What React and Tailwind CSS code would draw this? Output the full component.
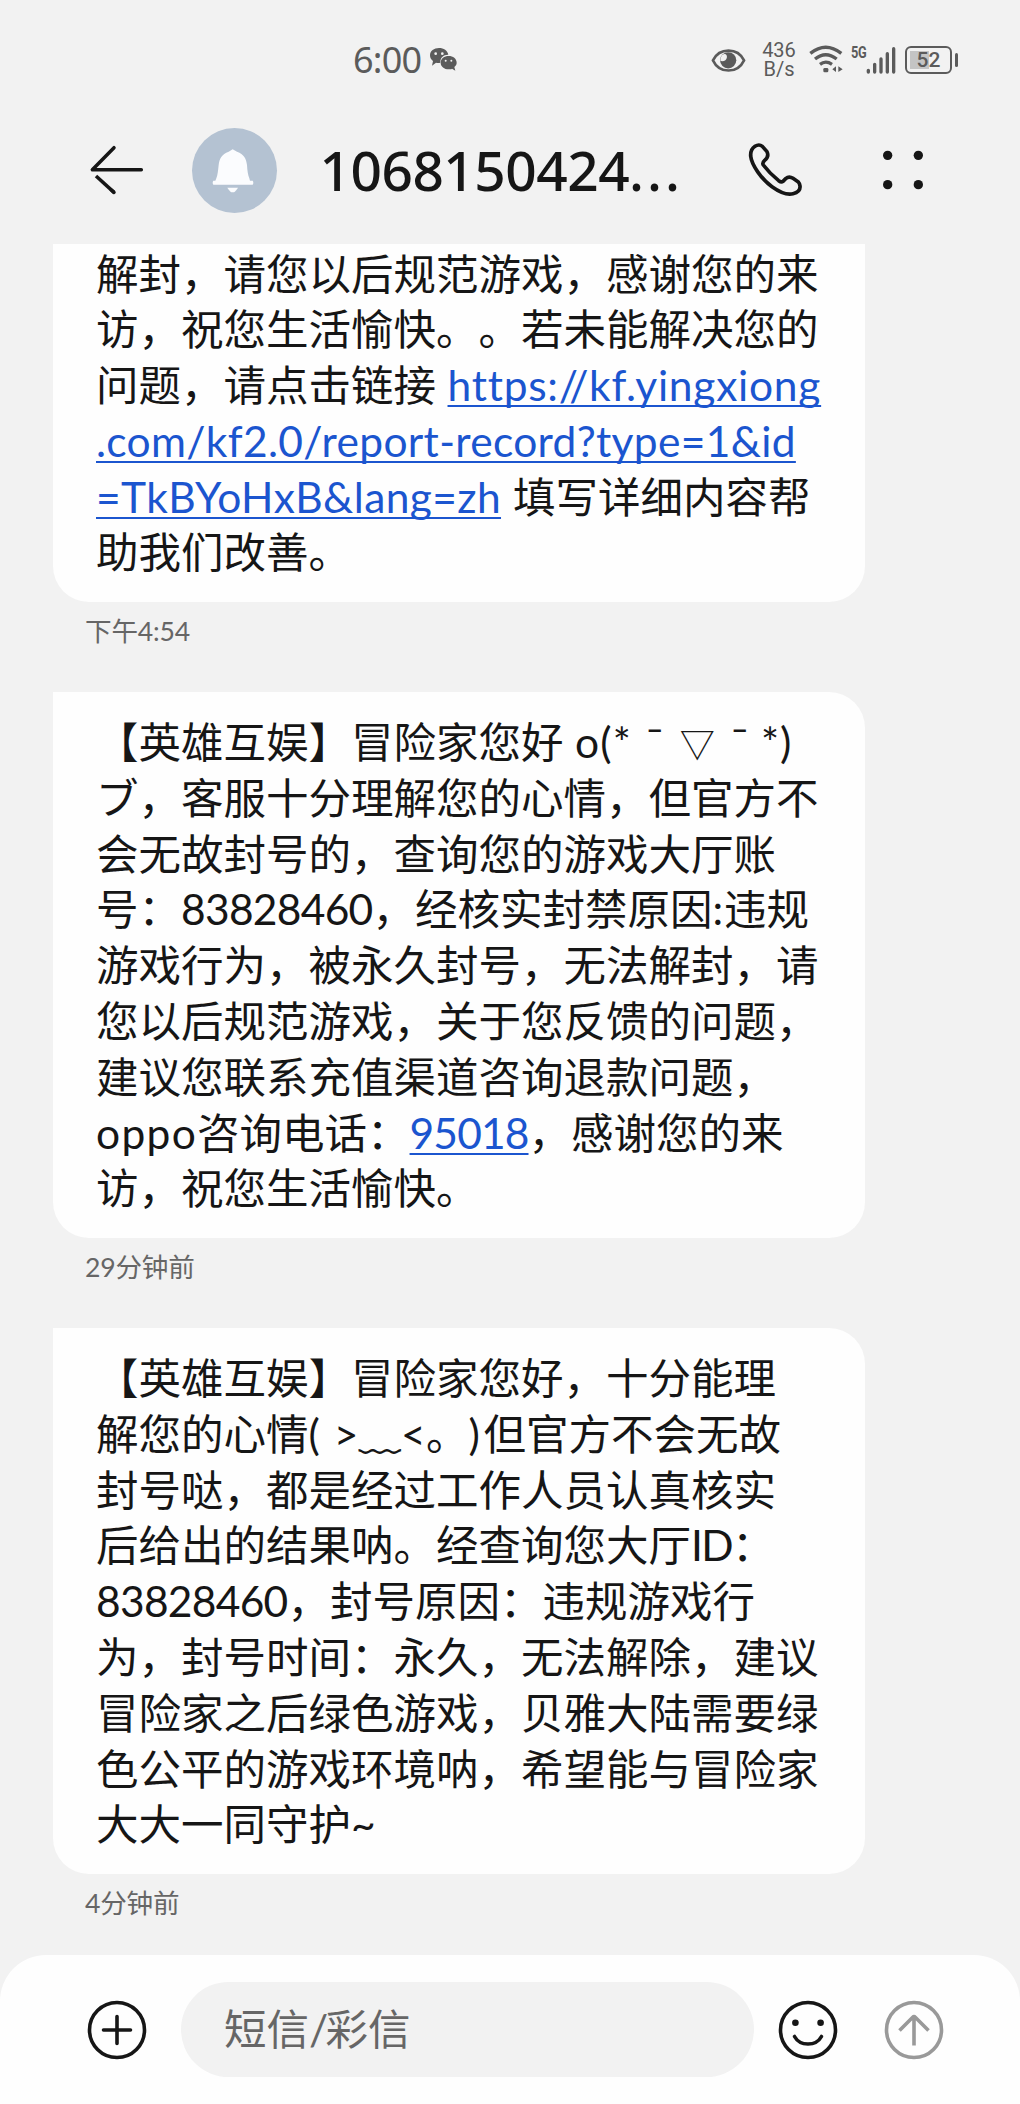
import React from "react";

const FONT = "font-['Lato','Noto_Sans_CJK_SC',sans-serif]";

function Line({ children }) {
  return <div className="flex h-[55.8px] items-baseline whitespace-pre">{children}</div>;
}

function Link({ children, className }) {
  return (
    <a className={`text-[#1b55cf] underline decoration-2 underline-offset-[4px] [text-decoration-skip-ink:none] ${className}`}>
      {children}
    </a>
  );
}

function Message({ children, time, className }) {
  return (
    <section>
      <div className={`w-[812px] bg-[#fefefe] pl-[43px] text-[42.5px] leading-[55.8px] text-[#161616] ${className}`}>
        {children}
      </div>
      <p className="ml-[32px] mt-[13px] h-8 whitespace-pre text-[26.6px] leading-8 tracking-[-0.2px] text-[#666]">{time}</p>
    </section>
  );
}

function StatusBar() {
  return (
    <header className="flex h-[120px] shrink-0 items-start pl-[353px] pt-[42px] text-[#5b5b5b]">
      <span className="w-[76px] font-['Noto_Sans'] text-[36px] leading-9 tracking-[-0.8px]">6:00</span>
      <svg className="mt-[5px] h-6 w-7" viewBox="268 50 84 72" fill="currentColor">
        <path d="M298 53c-15 0-27 9-27 22 0 7 3 13 9 17l-3 14 12-9c4 1 9 1 13 0-1-15 9-24 23-24h1c-2-12-14-20-28-20z" />
        <path d="M327 77c-13 0-24 8-24 20s11 20 24 20c4 0 7 0 10-2l10 6-3-11c5-4 7-8 7-13 0-12-11-20-24-20z" />
        <g fill="#f2f2f2"><circle cx="288" cy="70" r="4" /><circle cx="308" cy="70" r="4" /><circle cx="318" cy="91" r="3" /><circle cx="335" cy="91" r="3" /></g>
      </svg>
      <svg className="ml-[254px] mt-1.5 h-6 w-[35px]" viewBox="63 50 106 74" fill="none">
        <path d="M68 88C88 48 144 48 164 88C144 130 88 130 68 88Z" stroke="currentColor" strokeWidth="8" />
        <circle cx="115" cy="88" r="25" fill="currentColor" />
        <path d="M97 71C106 66 112 70 111 79C110 88 102 92 91 90C91 82 93 76 97 71Z" fill="#f2f2f2" />
      </svg>
      <div className="-mt-px ml-[15px] w-9 text-center font-['Roboto'] text-[20px] leading-[19px]">
        <p>436</p>
        <p>B/s</p>
      </div>
      <svg className="ml-[12px] mt-[3px] h-[30px] w-[35px]" viewBox="358 45 105 90" fill="none" stroke="currentColor" strokeWidth="10">
        <path d="M362 70Q408 33 455 70M376 87Q408 61 441 87M391 103Q408 90 427 103" />
        <rect x="401" y="114" width="15" height="13" rx="4" fill="currentColor" stroke="none" />
        <path d="M439 109v17l-11-8zM446 109v17l13-8z" fill="currentColor" stroke="none" />
      </svg>
      <span className="ml-[7px] w-[17px] font-['Roboto'] text-[17px] font-bold leading-5 tracking-[-0.5px]">
        <span className="inline-block origin-left scale-x-[0.75]">5G</span>
      </span>
      <svg className="-ml-0.5 mt-1 h-7 w-[31px]" viewBox="525 45 93 84" stroke="currentColor" strokeWidth="10" strokeLinecap="round">
        <path d="M532 118v5M551 100v23M570 84v39M589 68v55M608 53v70" />
      </svg>
      <div className="relative ml-[8px] mt-1 flex h-[28px] w-[47px] items-center justify-center rounded-[6px] border-[2.500px] border-current">
        <span className="absolute bottom-[3px] left-[3px] top-[3px] w-[19px] bg-[#c4c4c4]" />
        <span className="relative font-['Roboto'] text-[21px] font-medium leading-6">52</span>
      </div>
      <span className="ml-[3px] mt-[11px] h-[14px] w-[3px] rounded-sm bg-current" />
    </header>
  );
}

function TitleBar() {
  return (
    <div className="flex h-[124px] shrink-0 items-start pl-[89px] text-[#161616]">
      <svg className="mt-[25px] h-[50px] w-[55px]" viewBox="87 105 165 150" fill="none" stroke="currentColor" strokeWidth="10.5" strokeLinecap="round" strokeLinejoin="round">
        <path d="M162 113L97 179.500H244" />
        <path d="M162 247L108 198" strokeLinecap="butt" />
        <path d="M162 247l-8-7" />
      </svg>
      <div className="ml-[47.5px] mt-[7.5px] flex size-[85px] items-center justify-center rounded-full bg-[#b4c2d2]">
        <svg className="-ml-[3px] mt-0.5 h-11 w-[42px]" viewBox="457 114 126 132" fill="#fbfcfe">
          <path d="M519 115l13 7c21 7 28 22 30 40 1 18 3 31 7 40l2 7h8q4 6 0 12H461q-4-6 0-12h6l3-7c4-9 5-22 7-40 2-18 9-33 30-40z" />
          <path d="M503 230h32c-7 11-11 14-16 14s-9-3-16-14z" />
        </svg>
      </div>
      <h1 className="ml-[43px] w-[427px] whitespace-pre font-['Noto_Sans'] text-[55px] font-medium leading-[100px] tracking-[-0.500px]">
        1068150424<span className="tracking-[3px]">...</span>
      </h1>
      <svg className="mt-[21px] h-[58px] w-[58px]" viewBox="682 93 174 174" fill="none" stroke="currentColor" strokeWidth="11" strokeLinejoin="round">
        <path d="M742 125L728 109Q718 101 706 109Q692 118 693 138C696 165 725 207 757 230C785 250 805 255 820 251Q843 246 841 228Q840 220 836 216L820 205Q808 197 798 206L790 214Q785 218 777 212Q750 190 731 165Q727 158 735 151Q749 140 742 125Z" />
      </svg>
      <svg className="ml-[73px] mt-[25px] h-[50px] w-[50px]" viewBox="1074 103 150 150" fill="currentColor">
        <circle cx="1103" cy="134" r="14" /><circle cx="1195" cy="134" r="14" />
        <circle cx="1103" cy="222" r="14" /><circle cx="1195" cy="222" r="14" />
      </svg>
    </div>
  );
}

function Composer() {
  return (
    <footer className="flex h-[149px] shrink-0 items-start rounded-t-[46px] bg-[#fefefe] pl-[87px] pt-[27px]">
      <svg className="mt-[17.5px] size-[60px]" viewBox="0 0 60 60" fill="none" stroke="#161616" strokeWidth="3.6">
        <circle cx="30" cy="30" r="27.5" />
        <path d="M30 16.500V43.500M16.500 30H43.500" strokeLinecap="round" />
      </svg>
      <div className="ml-[34px] flex h-[95px] w-[573px] items-center rounded-full bg-[#f2f2f2] pb-0.5 pl-[43px] text-[42.5px] leading-[56px] text-[#666]">
        短信<span className="w-[16.5px]">/</span>彩信
      </div>
      <svg className="ml-[23.5px] mt-[17.5px] size-[60px]" viewBox="0 0 60 60" fill="none" stroke="#161616" strokeWidth="3.6">
        <circle cx="30" cy="30" r="27.5" />
        <path d="M16.500 36.500C22 46.500 38 46.500 43.500 36.500" strokeLinecap="round" />
        <g fill="#161616" stroke="none"><circle cx="17.400" cy="22.700" r="3.300" /><circle cx="42.600" cy="22.700" r="3.300" /></g>
      </svg>
      <svg className="ml-[46px] mt-[17.5px] size-[60px]" viewBox="0 0 60 60" fill="none" stroke="#999" strokeWidth="3.6">
        <circle cx="30" cy="30" r="27.5" />
        <path d="M30 45.500V16M15.500 30.500L28.500 17.500Q30 16 31.500 17.500L44.500 30.500" />
      </svg>
    </footer>
  );
}

export default function App() {
  return (
    <div className={`flex h-[2104px] w-[1020px] flex-col overflow-hidden bg-[#f2f2f2] [text-spacing-trim:space-all] ${FONT}`}>
      <StatusBar />
      <TitleBar />
      <main className="flex grow flex-col gap-[45.5px] pl-[53px]">
        <Message className="h-[357.5px] rounded-b-[36px] pt-[1.5px]" time="下午4:54">
          <Line>解封，请您以后规范游戏，感谢您的来</Line>
          <Line>访，祝您生活愉快。。若未能解决您的</Line>
          <Line>问题，请点击链接<Link className="ml-[11.5px] tracking-[0.74px]">https://kf.yingxiong</Link></Line>
          <Line><Link className="tracking-[0.32px]">.com/kf2.0/report-record?type=1&amp;id</Link></Line>
          <Line><Link className="mr-3 tracking-[0.39px]">=TkBYoHxB&amp;lang=zh</Link>填写详细内容帮</Line>
          <Line>助我们改善。</Line>
        </Message>
        <Message className="h-[545.5px] rounded-[36px] rounded-tl-none pt-[22px]" time="29分钟前">
          <Line>
            【英雄互娱】冒险家您好
            <span className="ml-[11.5px] w-[58.5px] tracking-[1.2px]">o(*</span>
            <span className="w-[42.5px] text-center">ˉ</span>
            <span className="w-[42.5px] pb-0.5 text-center font-['Noto_Sans_CJK_SC'] text-[35px] leading-none">▽</span>
            <span className="w-[42.5px] text-center">ˉ</span>
            <span className="tracking-[1px]">*)</span>
          </Line>
          <Line><span className="w-[42.5px]">ブ</span>，客服十分理解您的心情，但官方不</Line>
          <Line>会无故封号的，查询您的游戏大厅账</Line>
          <Line>号：<span className="tracking-[-0.71px]">83828460</span>，经核实封禁原因<span className="w-[11.5px]">:</span>违规</Line>
          <Line>游戏行为，被永久封号，无法解封，请</Line>
          <Line>您以后规范游戏，关于您反馈的问题，</Line>
          <Line>建议您联系充值渠道咨询退款问题，</Line>
          <Line><span className="tracking-[1.3px]">oppo</span>咨询电话：<Link className="tracking-[-0.86px]">95018</Link>，感谢您的来</Line>
          <Line>访，祝您生活愉快。</Line>
        </Message>
        <Message className="h-[545.5px] rounded-[36px] rounded-tl-none pt-[22px]" time="4分钟前">
          <Line>【英雄互娱】冒险家您好，十分能理</Line>
          <Line>
            解您的心情<span className="flex w-[50px] justify-between"><span>(</span><span>&gt;</span></span>﹏
            <span className="w-[25px]">&lt;</span>。<span className="w-[15px]">)</span>但官方不会无故
          </Line>
          <Line>封号哒，都是经过工作人员认真核实</Line>
          <Line>后给出的结果呐。经查询您大厅<span className="tracking-[-1.6px]">ID</span>：</Line>
          <Line><span className="tracking-[-0.71px]">83828460</span>，封号原因：违规游戏行</Line>
          <Line>为，封号时间：永久，无法解除，建议</Line>
          <Line>冒险家之后绿色游戏，贝雅大陆需要绿</Line>
          <Line>色公平的游戏环境呐，希望能与冒险家</Line>
          <Line>大大一同守护~</Line>
        </Message>
      </main>
      <Composer />
    </div>
  );
}
